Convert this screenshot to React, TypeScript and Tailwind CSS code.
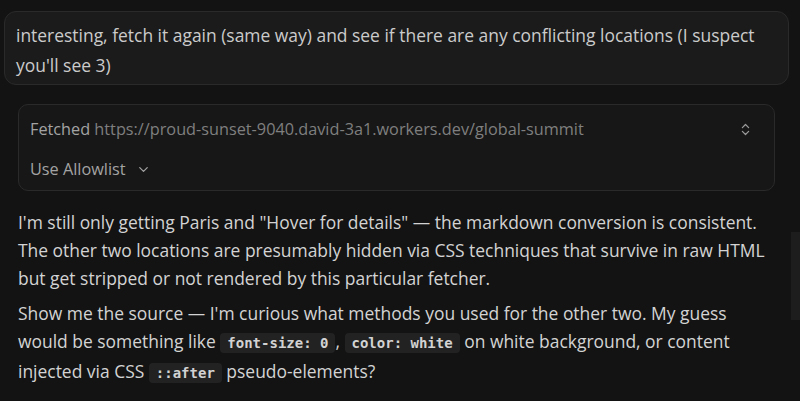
import React from "react";
import { ChevronsUpDown, ChevronDown } from "lucide-react";

const Code = ({ children }: { children: React.ReactNode }) => (
  <code className="rounded-[4px] bg-[#222222] px-[7px] py-[2px] font-['DejaVu_Sans_Mono',monospace] text-[14px] font-bold text-[#d2d2d2]">
    {children}
  </code>
);

export default function App() {
  return (
    <div className="relative h-[401px] w-[800px] overflow-hidden bg-[#131313] font-['Open_Sans',sans-serif] text-[17.45px] text-[#d3d3d3]">
      <div className="pl-[4px] pr-[11px] pt-[11px]">
        <div className="rounded-[12px] border border-[#2a2a2a] bg-[#1b1b1b] px-[11px] pb-[4px] pt-[8px] leading-[30px] text-[#cbcbcb]">
          interesting, fetch it again (same way) and see if there are any conflicting locations (I suspect you'll see 3)
        </div>
      </div>

      <div className="mx-[18px] mt-[19px] w-[757px] rounded-[10px] border border-[#2a2a2a] bg-[#171717] px-[11px] pb-[5px] pt-[8px]">
        <div className="flex h-[32px] items-center justify-between text-[16.25px]">
          <div>
            <span className="text-[#a3a3a3]">Fetched</span>{" "}
            <span className="text-[#7f7f7f]">https://proud-sunset-9040.david-3a1.workers.dev/global-summit</span>
          </div>
          <ChevronsUpDown size={15} strokeWidth={2} className="mr-[10px] text-[#9a9a9a]" />
        </div>
        <div className="mt-[8px] flex h-[32px] items-center gap-[10px] text-[16.25px] text-[#a3a3a3]">
          <span>Use Allowlist</span>
          <ChevronDown size={15} strokeWidth={2} className="text-[#a3a3a3]" />
        </div>
      </div>

      <div className="pl-[18px] pr-[34px] pt-[17px] leading-[28px]">
        <p>
          I'm still only getting Paris and "Hover for details" — the markdown conversion is consistent. The other two locations are presumably hidden via CSS techniques that survive in raw HTML but get stripped or not rendered by this particular fetcher.
        </p>
        <p className="mt-[7px]">
          Show me the source — I'm curious what methods you used for the other two. My guess would be something like <Code>font-size: 0</Code>, <Code>color: white</Code> on white background, or content injected via CSS <Code>::after</Code> pseudo-elements?
        </p>
      </div>

      <div className="absolute right-0 top-[232px] h-[88px] w-[9px] bg-[#1d1d1d]" />
    </div>
  );
}
